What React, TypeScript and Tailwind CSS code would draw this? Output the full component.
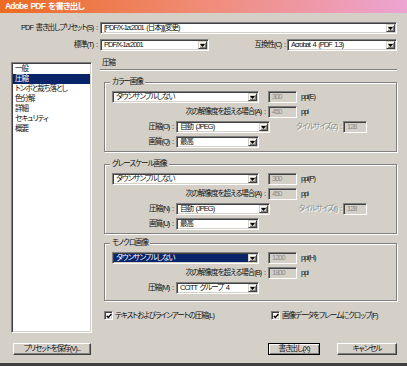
import React from "react";

const sunken =
  "border border-t-[#808080] border-l-[#808080] border-b-white border-r-white shadow-[inset_1px_1px_0_#404040,inset_-1px_-1px_0_#d4d0c8]";
const raised =
  "border border-t-[#d4d0c8] border-l-[#d4d0c8] border-b-[#404040] border-r-[#404040] shadow-[inset_1px_1px_0_#fff,inset_-1px_-1px_0_#808080]";

function Arrow() {
  return (
    <div className={`w-[9px] h-full shrink-0 bg-[#d4d0c8] flex items-center justify-center ${raised}`}>
      <svg width="5" height="3" viewBox="0 0 5 3">
        <path d="M0 0h5L2.5 3z" fill="#000" />
      </svg>
    </div>
  );
}

function Select({ w, text, hl }: { w: string; text: string; hl?: boolean }) {
  return (
    <div className={`${w} h-[12px] shrink-0 bg-white p-[1px] flex ${sunken}`}>
      <div
        className={`flex-1 min-w-0 pl-[2px] leading-[8px] whitespace-nowrap overflow-hidden ${
          hl ? "bg-[#0a246a] text-white" : ""
        }`}
      >
        {text}
      </div>
      <Arrow />
    </div>
  );
}

function Field({ w, text }: { w: string; text: string }) {
  return (
    <div className={`${w} h-[12px] shrink-0 bg-[#d4d0c8] pl-[3px] pt-[1px] leading-[8px] text-[#8a8a8a] ${sunken}`}>
      {text}
    </div>
  );
}

function Label({ w, text, gray }: { w: string; text: string; gray?: boolean }) {
  return (
    <div
      className={`${w} shrink-0 text-right whitespace-nowrap ${
        gray ? "text-[#8a8a8a] [text-shadow:1px_1px_0_#fff]" : ""
      }`}
    >
      {text}
    </div>
  );
}

function Group({ title, h, children }: { title: string; h: string; children: React.ReactNode }) {
  return (
    <div
      className={`relative ${h} border border-[#808080] shadow-[1px_1px_0_#fff,inset_1px_1px_0_#fff] pt-[8px] pl-[7px] flex flex-col gap-[3px]`}
    >
      <span className="absolute -top-[6px] left-[5px] px-[2px] bg-[#d4d0c8] leading-[10px] whitespace-nowrap">
        {title}
      </span>
      {children}
    </div>
  );
}

function Row({ children }: { children: React.ReactNode }) {
  return <div className="flex items-center h-[12px]">{children}</div>;
}

function ImageGroup({
  title,
  h,
  ppiKey,
  resKey,
  hi,
  lo,
  comp,
  compVal,
  tileKey,
  qualKey,
  hl,
}: {
  title: string;
  h: string;
  ppiKey: string;
  resKey: string;
  hi: string;
  lo: string;
  comp: string;
  compVal: string;
  tileKey?: string;
  qualKey?: string;
  hl?: boolean;
}) {
  return (
    <Group title={title} h={h}>
      <Row>
        <Select w="w-[147px]" text="ダウンサンプルしない" hl={hl} />
        <div className="ml-[9px]">
          <Field w="w-[29px]" text={hi} />
        </div>
        <span className="ml-[4px]">ppi({ppiKey})</span>
      </Row>
      <Row>
        <Label w="w-[153px]" text={`次の解像度を超える場合(${resKey}) :`} />
        <div className="ml-[3px]">
          <Field w="w-[29px]" text={lo} />
        </div>
        <span className="ml-[4px]">ppi</span>
      </Row>
      <Row>
        <Label w="w-[61px]" text={`圧縮(${comp}) :`} />
        <div className="ml-[3px]">
          <Select w={tileKey ? "w-[94px]" : "w-[83px]"} text={compVal} />
        </div>
        {tileKey && (
          <>
            <Label w="w-[71px]" text={`タイルサイズ(${tileKey}) :`} gray />
            <div className="ml-[2px]">
              <Field w="w-[24px]" text="128" />
            </div>
          </>
        )}
      </Row>
      {qualKey && (
        <Row>
          <Label w="w-[61px]" text={`画質(${qualKey}) :`} />
          <div className="ml-[3px]">
            <Select w="w-[83px]" text="最高" />
          </div>
        </Row>
      )}
    </Group>
  );
}

function Check({ label }: { label: string }) {
  return (
    <div className="flex items-center gap-[2px]">
      <div className={`w-[9px] h-[9px] bg-white flex items-center justify-center ${sunken}`}>
        <svg width="6" height="6" viewBox="0 0 7 7">
          <path d="M0.8 3.2 L2.7 5.2 L6.3 1.2" stroke="#000" strokeWidth="1.6" fill="none" />
        </svg>
      </div>
      <span className="whitespace-nowrap">{label}</span>
    </div>
  );
}

function Button({ w, text, def }: { w: string; text: string; def?: boolean }) {
  return (
    <div
      className={`${w} h-[12px] flex items-center justify-center whitespace-nowrap bg-[#d4d0c8] ${
        def
          ? "border border-black shadow-[inset_1px_1px_0_#fff,inset_-1px_-1px_0_#808080]"
          : "border border-t-white border-l-white border-b-[#404040] border-r-[#404040] shadow-[inset_-1px_-1px_0_#808080]"
      }`}
    >
      {text}
    </div>
  );
}

export default function App() {
  const items = ["一般", "圧縮", "トンボと裁ち落とし", "色分解", "詳細", "セキュリティ", "概要"];
  return (
    <div className="w-[407px] h-[366px] bg-[#d4d0c8] flex flex-col overflow-hidden text-[#111] text-[7.5px] leading-[10px] tracking-[-1px] [word-spacing:1.5px] font-['Liberation_Sans','Noto_Sans_CJK_JP',sans-serif] [font-feature-settings:'palt']">
      <div className="h-[13px] shrink-0 bg-[linear-gradient(to_right,#ec6a22,#f08c78_50%,#eca4d2)] pl-[5px] text-white font-bold text-[8.5px] leading-[13px] tracking-[-0.8px]">
        Adobe PDF を書き出し
      </div>
      <div className="flex-1 flex flex-col pt-[9px]">
        <div className="flex items-center h-[12px]">
          <Label w="w-[97px]" text="PDF 書き出しプリセット(S) :" />
          <div className="ml-[3px]">
            <Select w="w-[297px]" text="[PDF/X-1a:2001 (日本)](変更)" />
          </div>
        </div>
        <div className="flex items-center h-[12px] mt-[5px]">
          <Label w="w-[97px]" text="標準(T) :" />
          <div className="ml-[3px]">
            <Select w="w-[109px]" text="PDF/X-1a:2001" />
          </div>
          <Label w="w-[76px]" text="互換性(C) :" />
          <div className="ml-[2px]">
            <Select w="w-[110px]" text="Acrobat 4 (PDF 1.3)" />
          </div>
        </div>
        <div className="flex mt-[7px]">
          <div className="w-[100px] shrink-0 pl-[11px] pt-[4px] flex flex-col">
            <div className={`w-[81px] h-[271px] bg-white p-[1px] ${sunken}`}>
              {items.map((it, i) => (
                <div
                  key={it}
                  className={`h-[10px] pl-[2px] leading-[10px] whitespace-nowrap ${
                    i === 1 ? "bg-[#0a246a] text-white" : ""
                  }`}
                >
                  {it}
                </div>
              ))}
            </div>
            <div className="mt-[10px] ml-[2px]">
              <Button w="w-[78px]" text="プリセットを保存(V)..." />
            </div>
          </div>
          <div className="w-[297px] shrink-0 flex flex-col">
            <div className="h-[10px] pl-[2px] leading-[10px]">圧縮</div>
            <div className="mt-[1px] h-[2px] border-t border-t-[#808080] border-b border-b-white" />
            <div className="ml-[4px] w-[293px] mt-[11px] flex flex-col">
              <ImageGroup
                title="カラー画像"
                h="h-[70px]"
                ppiKey="E"
                resKey="A"
                hi="300"
                lo="450"
                comp="O"
                compVal="自動 (JPEG)"
                tileKey="Z"
                qualKey="Q"
              />
              <div className="mt-[12px]">
                <ImageGroup
                  title="グレースケール画像"
                  h="h-[70px]"
                  ppiKey="P"
                  resKey="A"
                  hi="300"
                  lo="450"
                  comp="N"
                  compVal="自動 (JPEG)"
                  tileKey="I"
                  qualKey="U"
                />
              </div>
              <div className="mt-[9px]">
                <ImageGroup
                  title="モノクロ画像"
                  h="h-[58px]"
                  ppiKey="H"
                  resKey="B"
                  hi="1200"
                  lo="1800"
                  comp="M"
                  compVal="CCITT グループ 4"
                  hl
                />
              </div>
            </div>
            <div className="flex items-center h-[9px] mt-[10px]">
              <div className="w-[171px] shrink-0 pl-[4px]">
                <Check label="テキストおよびラインアートの圧縮(L)" />
              </div>
              <Check label="画像データをフレームにクロップ(F)" />
            </div>
            <div className="flex justify-end gap-[17px] mt-[23px]">
              <Button w="w-[52px]" text="書き出し(X)" def />
              <Button w="w-[60px]" text="キャンセル" />
            </div>
          </div>
        </div>
      </div>
      <div className="h-[3px] shrink-0 bg-[#404040]" />
    </div>
  );
}
